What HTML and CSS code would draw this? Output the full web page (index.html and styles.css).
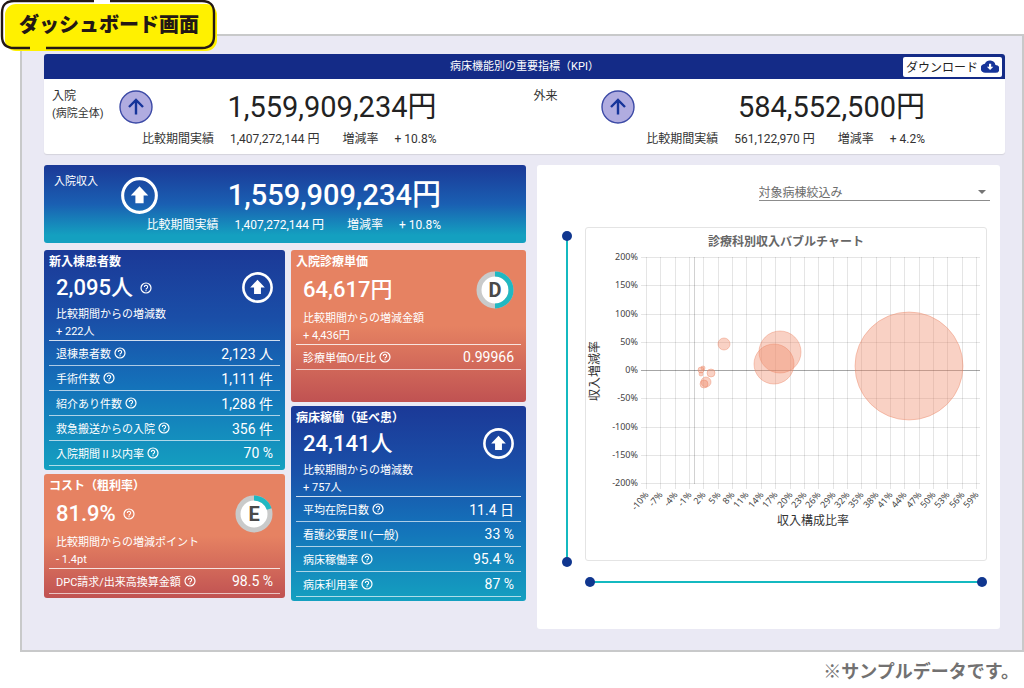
FILE: index.html
```html
<!DOCTYPE html>
<html lang="ja">
<head>
<meta charset="utf-8">
<meta name="viewport" content="width=device-width, initial-scale=1">
<title>ダッシュボード画面</title>
<link rel="stylesheet" href="styles.css">
</head>
<body>
<svg class="defs" aria-hidden="true">
  <symbol id="help" viewBox="0 0 24 24"><circle cx="12" cy="12" r="10" fill="none" stroke="currentColor" stroke-width="2.4"/><path d="M8.7 9.8a3.3 3.3 0 1 1 5.2 2.7c-1.2.8-1.9 1.3-1.9 2.6" fill="none" stroke="currentColor" stroke-width="2.2"/><rect x="10.9" y="16.3" width="2.2" height="2.2" fill="currentColor"/></symbol>
  <symbol id="up" viewBox="0 0 36 36"><circle cx="18" cy="18" r="16.4" fill="none" stroke="#fff" stroke-width="3"/><path d="M18 9l8.5 9H22v7.5h-8V18H9.500z" fill="#fff"/></symbol>
  <symbol id="trend" viewBox="0 0 34 34"><circle cx="17" cy="17" r="16" fill="#b0ace0" stroke="#3c4aa6" stroke-width="1.400"/><path d="M17 24.500V10.500M10 17l7-7 7 7" fill="none" stroke="#16349a" stroke-width="2.400"/></symbol>
</svg>

<h1 class="badge">
  <svg class="badge-shape" viewBox="0 0 218 52" aria-hidden="true">
    <rect x="5" y="4" width="212" height="47" rx="11" fill="#fff100"/>
    <path d="M94 1H14Q2 1 2 13V36Q2 48 14 48H30M46 48H202Q214 48 214 36V13Q214 1 202 1H110" fill="none" stroke="#231815" stroke-width="2.400"/>
  </svg>
  <span class="badge-text">ダッシュボード画面</span>
</h1>

<main class="frame">
  <section class="kpi">
    <header class="kpi-head">
      <h2 class="kpi-title">病床機能別の重要指標（KPI）</h2>
      <button class="download" type="button">ダウンロード
        <svg class="cloud" viewBox="0 0 20 14" aria-hidden="true"><path d="M16.100 5.200A6.300 6.300 0 0 0 4.300 4 5 5 0 0 0 5 14h11a4.400 4.400 0 0 0 .1-8.800z" fill="#16349a"/><path d="M8.900 4h2.400v3.300h2.400L10.100 11 6.500 7.300h2.400z" fill="#fff"/></svg>
      </button>
    </header>
    <div class="kpi-body">
      <div class="stat inpatient">
        <div class="stat-label">入院<small class="stat-note">(病院全体)</small></div>
        <svg class="trend"><use href="#trend"/></svg>
        <div class="stat-value">1,559,909,234円</div>
        <div class="stat-sub"><span>比較期間実績</span><span class="prev">1,407,272,144 円</span><span>増減率</span><span>+ 10.8%</span></div>
      </div>
      <div class="stat outpatient">
        <div class="stat-label">外来</div>
        <svg class="trend"><use href="#trend"/></svg>
        <div class="stat-value">584,552,500円</div>
        <div class="stat-sub"><span>比較期間実績</span><span class="prev">561,122,970 円</span><span>増減率</span><span>+ 4.2%</span></div>
      </div>
    </div>
  </section>

  <div class="columns">
    <div class="left">
      <section class="stat income">
        <div class="stat-label">入院収入</div>
        <svg class="trend"><use href="#up"/></svg>
        <div class="stat-value">1,559,909,234円</div>
        <div class="stat-sub"><span>比較期間実績</span><span class="prev">1,407,272,144 円</span><span>増減率</span><span>+ 10.8%</span></div>
      </section>

      <div class="cards">
        <div class="stack">
          <section class="card blue">
            <h3 class="card-title">新入棟患者数</h3>
            <div class="card-main"><span class="card-value">2,095人</span><svg class="help"><use href="#help"/></svg><svg class="up"><use href="#up"/></svg></div>
            <p class="card-desc">比較期間からの増減数<br>+ 222人</p>
            <dl class="rows">
              <div class="row"><dt>退棟患者数<svg class="help"><use href="#help"/></svg></dt><dd>2,123 人</dd></div>
              <div class="row"><dt>手術件数<svg class="help"><use href="#help"/></svg></dt><dd>1,111 件</dd></div>
              <div class="row"><dt>紹介あり件数<svg class="help"><use href="#help"/></svg></dt><dd>1,288 件</dd></div>
              <div class="row"><dt>救急搬送からの入院<svg class="help"><use href="#help"/></svg></dt><dd>356 件</dd></div>
              <div class="row"><dt>入院期間Ⅱ以内率<svg class="help"><use href="#help"/></svg></dt><dd>70 %</dd></div>
            </dl>
          </section>
          <section class="card coral">
            <h3 class="card-title">コスト（粗利率）</h3>
            <div class="card-main"><span class="card-value">81.9%</span><svg class="help"><use href="#help"/></svg>
              <svg class="grade" viewBox="0 0 38 38"><circle cx="19" cy="19" r="16" fill="#fff" stroke="#c9caca" stroke-width="5"/><path d="M19 3A16 16 0 0 1 34.200 14" fill="none" stroke="#20b8c2" stroke-width="5"/><text class="grade-text" x="19" y="26">E</text></svg></div>
            <p class="card-desc">比較期間からの増減ポイント<br>- 1.4pt</p>
            <dl class="rows">
              <div class="row"><dt>DPC請求/出来高換算金額<svg class="help"><use href="#help"/></svg></dt><dd>98.5 %</dd></div>
            </dl>
          </section>
        </div>
        <div class="stack">
          <section class="card coral tall">
            <h3 class="card-title">入院診療単価</h3>
            <div class="card-main"><span class="card-value">64,617円</span>
              <svg class="grade" viewBox="0 0 38 38"><circle cx="19" cy="19" r="16" fill="#fff" stroke="#c9caca" stroke-width="5"/><path d="M19 3A16 16 0 0 1 19 35" fill="none" stroke="#20b8c2" stroke-width="5"/><text class="grade-text" x="19" y="26">D</text></svg></div>
            <p class="card-desc">比較期間からの増減金額<br>+ 4,436円</p>
            <dl class="rows">
              <div class="row"><dt>診療単価O/E比<svg class="help"><use href="#help"/></svg></dt><dd>0.99966</dd></div>
            </dl>
          </section>
          <section class="card blue">
            <h3 class="card-title">病床稼働（延べ患）</h3>
            <div class="card-main"><span class="card-value">24,141人</span><svg class="up"><use href="#up"/></svg></div>
            <p class="card-desc">比較期間からの増減数<br>+ 757人</p>
            <dl class="rows">
              <div class="row"><dt>平均在院日数<svg class="help"><use href="#help"/></svg></dt><dd>11.4 日</dd></div>
              <div class="row"><dt>看護必要度Ⅱ(一般)</dt><dd>33 %</dd></div>
              <div class="row"><dt>病床稼働率<svg class="help"><use href="#help"/></svg></dt><dd>95.4 %</dd></div>
              <div class="row"><dt>病床利用率<svg class="help"><use href="#help"/></svg></dt><dd>87 %</dd></div>
            </dl>
          </section>
        </div>
      </div>
    </div>

    <section class="panel">
      <div class="filter">
        <select class="filter-select" aria-label="対象病棟絞込み"><option>対象病棟絞込み</option></select>
        <svg class="caret" viewBox="0 0 8 4" aria-hidden="true"><path d="M0 0h8L4 4z" fill="#757575"/></svg>
      </div>
      <div class="chart-grid">
        <div class="range vertical">
          <input type="range" min="-200" max="200" value="-200" aria-label="収入増減率 上端">
          <input type="range" min="-200" max="200" value="200" aria-label="収入増減率 下端">
        </div>
        <div class="chart">
          <svg class="plot" viewBox="0 0 400 332" role="img" aria-label="診療科別収入バブルチャート">
            <text class="chart-title" x="200" y="18">診療科別収入バブルチャート</text>
            <path class="grid" d="M55 29.500H394M55 57.500H394M55 86.500H394M55 114.500H394M55 170.500H394M55 199.500H394M55 227.500H394M55 255.500H394"/>
            <path class="grid" d="M60.500 29V261M74.500 29V261M89.500 29V261M103.500 29V261M117.500 29V261M132.500 29V261M146.500 29V261M160.500 29V261M175.500 29V261M189.500 29V261M204.500 29V261M218.500 29V261M232.500 29V261M247.500 29V261M261.500 29V261M275.500 29V261M290.500 29V261M304.500 29V261M318.500 29V261M333.500 29V261M347.500 29V261M361.500 29V261M376.500 29V261M390.500 29V261"/>
            <path class="zero-x" d="M108.500 29V256"/>
            <path class="zero-y" d="M55 142.500H394"/>
            <g class="bubbles">
              <circle cx="138" cy="116" r="6"/><circle cx="115" cy="142" r="3"/><circle cx="117" cy="140" r="2"/><circle cx="115" cy="146" r="2"/><circle cx="125" cy="145" r="4"/><circle cx="120" cy="154" r="5"/><circle cx="118" cy="156" r="4"/><circle cx="194" cy="124" r="21"/><circle cx="188" cy="136" r="20"/><circle cx="323" cy="138" r="54"/>
            </g>
            <g class="tick end">
              <text x="52" y="32">200%</text><text x="52" y="60">150%</text><text x="52" y="89">100%</text><text x="52" y="117">50%</text><text x="52" y="145">0%</text><text x="52" y="173">-50%</text><text x="52" y="202">-100%</text><text x="52" y="230">-150%</text><text x="52" y="258">-200%</text>
            </g>
            <g class="tick end">
              <text transform="translate(63 267) rotate(-50)">-10%</text><text transform="translate(77 267) rotate(-50)">-7%</text><text transform="translate(92 267) rotate(-50)">-4%</text><text transform="translate(106 267) rotate(-50)">-1%</text><text transform="translate(120 267) rotate(-50)">2%</text><text transform="translate(135 267) rotate(-50)">5%</text><text transform="translate(149 267) rotate(-50)">8%</text><text transform="translate(163 267) rotate(-50)">11%</text><text transform="translate(178 267) rotate(-50)">14%</text><text transform="translate(192 267) rotate(-50)">17%</text><text transform="translate(207 267) rotate(-50)">20%</text><text transform="translate(221 267) rotate(-50)">23%</text><text transform="translate(235 267) rotate(-50)">26%</text><text transform="translate(250 267) rotate(-50)">29%</text><text transform="translate(264 267) rotate(-50)">32%</text><text transform="translate(278 267) rotate(-50)">35%</text><text transform="translate(293 267) rotate(-50)">38%</text><text transform="translate(307 267) rotate(-50)">41%</text><text transform="translate(321 267) rotate(-50)">44%</text><text transform="translate(336 267) rotate(-50)">47%</text><text transform="translate(350 267) rotate(-50)">50%</text><text transform="translate(364 267) rotate(-50)">53%</text><text transform="translate(379 267) rotate(-50)">56%</text><text transform="translate(393 267) rotate(-50)">59%</text>
            </g>
            <text class="axis" transform="translate(13 143) rotate(-90)">収入増減率</text>
            <text class="axis" x="227" y="297">収入構成比率</text>
          </svg>
        </div>
        <div class="range horizontal">
          <input type="range" min="-10" max="60" value="-10" aria-label="収入構成比率 下限">
          <input type="range" min="-10" max="60" value="60" aria-label="収入構成比率 上限">
        </div>
      </div>
    </section>
  </div>
</main>
<p class="footnote">※サンプルデータです。</p>
</body>
</html>
```

FILE: styles.css
```css
* { box-sizing: border-box; }

body {
  margin: 0;
  background: #fff;
  color: #333;
  font-family: Roboto, "Noto Sans CJK JP", sans-serif;
  font-size: 12px;
}

h1, h2, h3, p, dl, dd { margin: 0; }

.defs { position: absolute; width: 0; height: 0; }

/* Title badge lying over the frame's corner */
.badge {
  position: absolute;
  top: 0;
  left: 0;
  width: 218px;
  height: 52px;
}
.badge-shape { position: absolute; inset: 0; width: 100%; height: 100%; }
.badge-text {
  position: relative;
  display: block;
  text-align: center;
  font: 900 20px/48px "Noto Sans CJK JP", sans-serif;
  color: #231815;
}

.frame {
  margin: 34px 0 0 20px;
  padding: 18px 17px 21px 22px;
  background: #eae9f4;
  border: 2px solid #c8c9ca;
}

/* KPI summary */
.kpi {
  background: #fff;
  border-radius: 3px;
  box-shadow: 0 1px 1px #d4d3dc;
  overflow: hidden;
}
.kpi-head {
  display: grid;
  grid-template-columns: 1fr auto 1fr;
  align-items: center;
  height: 25px;
  padding: 0 3px;
  background: #142b87;
}
.kpi-title {
  grid-column: 2;
  color: #fff;
  font-size: 11px;
  line-height: 22px;
  font-weight: 400;
}
.download {
  justify-self: end;
  display: flex;
  align-items: center;
  gap: 3px;
  height: 20px;
  padding: 0 3px;
  border: 0;
  border-radius: 2px;
  background: #fff;
  color: #222;
  font: 12px "Noto Sans CJK JP", sans-serif;
  white-space: nowrap;
}
.cloud { width: 18px; height: 13px; }
.kpi-body {
  display: grid;
  grid-template-columns: 1fr 1fr;
  padding: 8px 0 3px;
}

.stat {
  display: grid;
  grid-template-columns: 67px 36px 1fr;
  grid-template-rows: 40px 24px;
  align-items: center;
}
.inpatient { padding: 0 88px 0 8px; }
.outpatient { padding: 0 80px 0 9px; }
.stat-label {
  align-self: start;
  font-size: 12px;
  line-height: 18px;
  white-space: nowrap;
}
.stat-note { display: block; font-size: 11px; }
.trend { width: 34px; height: 34px; }
.stat-value {
  justify-self: end;
  color: #222;
  font-size: 29px;
  line-height: 40px;
  white-space: nowrap;
}
.stat-sub {
  grid-column: 2 / -1;
  justify-self: end;
  display: flex;
  align-items: baseline;
  gap: 16px;
  line-height: 18px;
  white-space: nowrap;
}
.prev { margin-right: 7px; }

.columns {
  display: grid;
  grid-template-columns: 482fr 463fr;
  gap: 11px;
  padding: 11px 5px 0 0;
}

.income {
  grid-template-rows: 40px 20px;
  padding: 10px 85px 8px 10px;
  border-radius: 3px;
  background: linear-gradient(#1b3997, #1a5fb2 50%, #14a0c0 90%);
  color: #fff;
}
.income .stat-label { font-size: 11px; line-height: 14px; }
.income .trend { width: 37px; height: 37px; }
.income .stat-value { color: #fff; font-weight: 500; }

/* Metric cards */
.cards {
  display: grid;
  grid-template-columns: 241fr 235fr;
  gap: 6px;
  padding-top: 7px;
}
.stack { display: flex; flex-direction: column; gap: 4px; }
.card {
  padding: 3px 5px 4px;
  border-radius: 3px;
  color: #fff;
}
.blue { background: linear-gradient(#1b3997, #1a4fa8 32%, #1472ba 62%, #14a0c0); }
.coral { background: linear-gradient(#e68262 50%, #c05252); }
.tall { padding-bottom: 32px; }
.card-title { font-size: 12px; line-height: 18px; font-weight: 700; }
.card-main {
  display: flex;
  align-items: center;
  gap: 7px;
  height: 33px;
  padding: 0 7px;
}
.coral .card-main { height: 37px; }
.card-value {
  font-size: 22px;
  line-height: 32px;
  font-weight: 500;
  white-space: nowrap;
}
.help { width: 12px; height: 12px; flex: none; }
.up { width: 31px; height: 31px; margin-left: auto; }
.grade { width: 38px; height: 38px; margin-left: auto; }
.grade-text {
  font: 700 20px Roboto, sans-serif;
  fill: #4a4a4a;
  text-anchor: middle;
}
.card-desc { padding: 2px 0 0 7px; font-size: 11px; line-height: 17px; }
.rows { border-top: 1px solid rgba(255, 255, 255, .8); }
.row {
  display: flex;
  justify-content: space-between;
  align-items: center;
  height: 25px;
  padding: 0 7px;
  border-bottom: 1px solid rgba(255, 255, 255, .65);
  white-space: nowrap;
}
.row dt { display: flex; align-items: center; gap: 3px; font-size: 11px; }
.row dd { font-size: 14px; }

/* Chart panel */
.panel {
  padding: 18px 0 42px;
  border-radius: 3px;
  background: #fff;
}
.filter {
  position: relative;
  width: 50%;
  margin: 0 10px 0 auto;
}
.filter-select {
  appearance: none;
  display: block;
  width: 100%;
  height: 18px;
  padding: 0;
  border: 0;
  border-bottom: 1px solid #8c8c8c;
  border-radius: 0;
  background: transparent;
  color: #6c6c6c;
  font: 12px "Noto Sans CJK JP", sans-serif;
}
.caret { position: absolute; right: 4px; top: 7px; width: 8px; height: 4px; }
.chart-grid {
  display: grid;
  grid-template-columns: 48px 1fr;
  padding: 26px 13px 0 0;
}
.chart {
  margin-bottom: 6px;
  border: 1px solid #e4e4e4;
  border-radius: 3px;
}
.plot { display: block; width: 100%; }
.grid { fill: none; stroke: #000; stroke-opacity: .1; }
.zero-x { stroke: #000; stroke-opacity: .18; }
.zero-y { stroke: #000; stroke-opacity: .35; }
.bubbles { fill: #f08c6c; fill-opacity: .4; stroke: #ec8464; stroke-opacity: .4; }
.chart-title {
  font: 700 12px "Noto Sans CJK JP", sans-serif;
  fill: #666;
  text-anchor: middle;
}
.axis {
  font: 12px "Noto Sans CJK JP", sans-serif;
  fill: #333;
  text-anchor: middle;
}
.tick { font: 9px "Noto Sans", sans-serif; fill: #444; }
.end { text-anchor: end; }

/* Two-handled range sliders */
.range { position: relative; }
.range::before {
  content: "";
  position: absolute;
  inset: 4px;
  background: #14b9c0;
}
.vertical { width: 10px; margin: 4px 0 0 25px; }
.horizontal { grid-column: 2; height: 10px; margin-top: 10px; }
.range input {
  appearance: none;
  position: absolute;
  inset: 0;
  width: 100%;
  height: 100%;
  margin: 0;
  background: transparent;
  pointer-events: none;
}
.vertical input { writing-mode: vertical-lr; }
.range input::-webkit-slider-thumb {
  appearance: none;
  width: 10px;
  height: 10px;
  border-radius: 50%;
  background: #10368f;
  pointer-events: auto;
}

.footnote {
  padding: 4px 5px 0 0;
  text-align: right;
  font: 700 18px/28px "Noto Sans CJK JP", sans-serif;
  color: #727171;
}
```
